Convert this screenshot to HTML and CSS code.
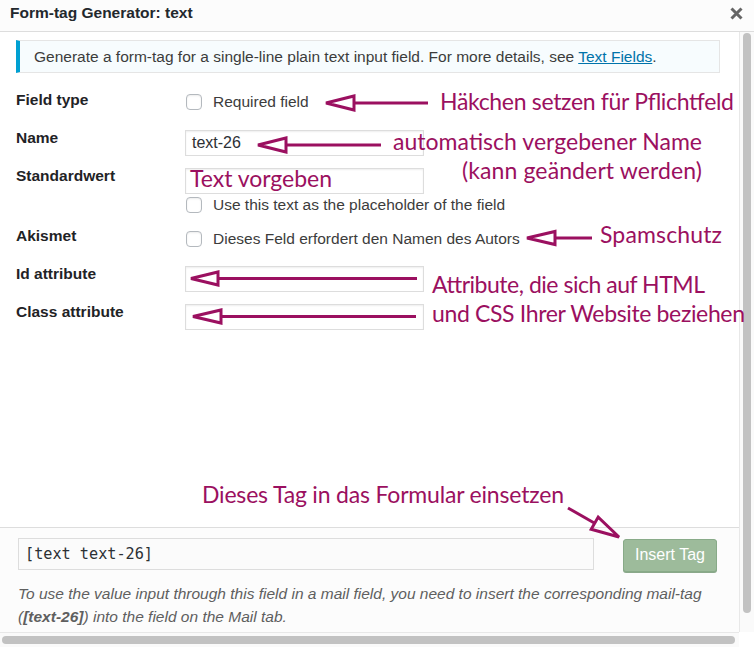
FILE: index.html
```html
<!DOCTYPE html>
<html lang="de">
<head>
<meta charset="utf-8">
<title>Form-tag Generator: text</title>
<link rel="stylesheet" href="styles.css">
</head>
<body>
<div class="window">
  <header class="titlebar">
    <h1 class="title">Form-tag Generator: text</h1>
    <span class="close" aria-label="Close">
      <svg width="13" height="13" viewBox="0 0 13 13"><path d="M1.5 1.5L11.5 11.5M11.5 1.5L1.5 11.5" stroke="#666" stroke-width="3" fill="none"/></svg>
    </span>
  </header>

  <div class="viewport">
    <main class="pane">
      <div class="content">
        <div class="notice">
          <p>Generate a form-tag for a single-line plain text input field. For more details, see <a href="#">Text Fields</a>.</p>
        </div>

        <div class="form">
          <div class="row">
            <div class="label">Field type</div>
            <div class="ctrl">
              <label class="check"><span class="box"></span>Required field</label>
            </div>
          </div>
          <div class="row">
            <div class="label">Name</div>
            <div class="ctrl"><div class="input">text-26</div></div>
          </div>
          <div class="row row-tall">
            <div class="label">Standardwert</div>
            <div class="ctrl">
              <div class="input"></div>
              <label class="check check-sub"><span class="box"></span>Use this text as the placeholder of the field</label>
            </div>
          </div>
          <div class="row">
            <div class="label">Akismet</div>
            <div class="ctrl">
              <label class="check check-low"><span class="box"></span>Dieses Feld erfordert den Namen des Autors</label>
            </div>
          </div>
          <div class="row">
            <div class="label">Id attribute</div>
            <div class="ctrl"><div class="input"></div></div>
          </div>
          <div class="row">
            <div class="label">Class attribute</div>
            <div class="ctrl"><div class="input"></div></div>
          </div>
        </div>
      </div>

      <footer class="insert-box">
        <div class="insert-row">
          <div class="tag-field">[text text-26]</div>
          <span class="button">Insert Tag</span>
        </div>
        <p class="description">To use the value input through this field in a mail field, you need to insert the corresponding mail-tag<br>(<strong>[text-26]</strong>) into the field on the Mail tab.</p>
      </footer>
    </main>
    <div class="vscroll"><div class="vthumb"></div></div>
  </div>

  <div class="hbar">
    <div class="htrack"><div class="hthumb"></div></div>
    <div class="corner"></div>
  </div>

  <svg class="annotations" width="754" height="647" viewBox="0 0 754 647">
    <g class="arrows">
      <path d="M354 103H428"/><path d="M326 103L354 96V110Z"/>
      <path d="M286 145H381"/><path d="M258 145L286 138V152Z"/>
      <path d="M555 238H592"/><path d="M527 238L555 231.5V244.5Z"/>
      <path d="M218 278.5H417"/><path d="M191 278.5L218 272V285Z"/>
      <path d="M221 316.5H416"/><path d="M193 316.5L221 310V323Z"/>
      <path d="M568 508L594.7 523.2"/><path d="M619 537L591.2 529.3L598.2 517.1Z"/>
    </g>
    <g class="notes">
      <text x="440" y="110" textLength="294" lengthAdjust="spacing">Häkchen setzen für Pflichtfeld</text>
      <text x="393" y="150" textLength="309" lengthAdjust="spacing">automatisch vergebener Name</text>
      <text x="462" y="179" textLength="240" lengthAdjust="spacing">(kann geändert werden)</text>
      <text x="190" y="187" textLength="142" lengthAdjust="spacing">Text vorgeben</text>
      <text x="600" y="243" textLength="122" lengthAdjust="spacing">Spamschutz</text>
      <text x="432" y="293" textLength="273" lengthAdjust="spacing">Attribute, die sich auf HTML</text>
      <text x="432" y="322" textLength="313" lengthAdjust="spacing">und CSS Ihrer Website beziehen</text>
      <text x="202" y="503" textLength="362" lengthAdjust="spacing">Dieses Tag in das Formular einsetzen</text>
    </g>
  </svg>
</div>
</body>
</html>
```

FILE: styles.css
```css
* { box-sizing: border-box; }

html, body {
  margin: 0;
  padding: 0;
  background: #fff;
}

body {
  font-family: "Liberation Sans", Arial, Helvetica, sans-serif;
  font-size: 15.5px;
  color: #3c3c3c;
}

.window {
  position: relative;
  width: 754px;
  height: 647px;
  overflow: hidden;
  background: #fff;
}

/* Title bar */
.titlebar {
  height: 32px;
  display: flex;
  align-items: center;
  justify-content: space-between;
  padding: 0 11px 6px 10px;
  background: #fcfcfc;
  border-bottom: 1px solid #ddd;
}

.title {
  margin: 0;
  font-size: 15.5px;
  line-height: 18px;
  font-weight: bold;
  color: #23282d;
}

.close {
  display: flex;
  width: 13px;
  height: 13px;
  margin-top: 1px;
}

/* Main viewport */
.viewport {
  display: flex;
  height: 600px;
}

.pane {
  width: 739px;
  display: flex;
  flex-direction: column;
}

.content {
  flex: 1;
  padding: 8px 19px 0 16px;
}

.notice {
  height: 33px;
  border: 1px solid #e5e5e5;
  border-left: 4px solid #00a0d2;
  background: #f7fcfe;
  padding: 0 14px;
  display: flex;
  align-items: center;
}

.notice p {
  margin: 0;
  line-height: 20px;
  color: #3c3c3c;
}

.notice a {
  color: #0073aa;
  text-decoration: underline;
}

/* Form rows */
.form {
  margin-top: 18px;
}

.row {
  display: flex;
  min-height: 38px;
}

.row-tall {
  min-height: 60px;
}

.label {
  width: 169px;
  flex: none;
  font-weight: bold;
  line-height: 18px;
  color: #1f2326;
}

.ctrl {
  display: flex;
  flex-direction: column;
  align-items: flex-start;
}

.input {
  width: 239px;
  height: 26px;
  margin-top: 1px;
  border: 1px solid #ddd;
  box-shadow: inset 0 1px 2px rgba(0, 0, 0, 0.07);
  background: #fff;
  padding: 0 6px;
  line-height: 24px;
  color: #2c3034;
  font-size: 16px;
}

.check {
  display: flex;
  align-items: center;
  height: 16px;
  margin-top: 3px;
  color: #3c3c3c;
  line-height: 18px;
}

.check-sub {
  margin-top: 3px;
}

.check-low {
  margin-top: 4px;
}

.box {
  width: 16px;
  height: 16px;
  margin: 0 11px 0 1px;
  border: 1px solid #b4b9be;
  border-radius: 4px;
  background: #fff;
  box-shadow: inset 0 1px 2px rgba(0, 0, 0, 0.08);
}

/* Footer */
.insert-box {
  height: 105px;
  background: #fcfcfc;
  border-top: 1px solid #ddd;
  padding: 10px 22px 0 18px;
}

.insert-row {
  display: flex;
  justify-content: space-between;
  align-items: flex-start;
}

.tag-field {
  width: 576px;
  height: 32px;
  border: 1px solid #ddd;
  background: #fbfbfb;
  padding: 0 6px;
  font-family: "DejaVu Sans Mono", "Liberation Mono", monospace;
  font-size: 15.2px;
  line-height: 30px;
  color: #2c3034;
}

.button {
  width: 94px;
  height: 33px;
  margin-top: 1px;
  border: 1px solid #88aa88;
  border-radius: 3px;
  background: #9dbb9b;
  box-shadow: 0 1px 0 #8aa88a;
  color: #fff;
  text-align: center;
  line-height: 30px;
  font-size: 16px;
}

.description {
  margin: 10px 0 0;
  font-style: italic;
  line-height: 23px;
  color: #5f5f5f;
  white-space: nowrap;
}

.description strong {
  font-weight: bold;
}

/* Scrollbars */
.vscroll {
  width: 15px;
  border-left: 1px solid #e8e8e8;
  background: #fafafa;
  padding: 1px 3px 0 3px;
}

.vthumb {
  width: 8px;
  height: 580px;
  border-radius: 4px;
  background: #c2c2c2;
}

.hbar {
  display: flex;
  height: 15px;
}

.htrack {
  width: 739px;
  border-top: 1px solid #e8e8e8;
  background: #fafafa;
  padding: 3px 0 0 2px;
}

.hthumb {
  width: 733px;
  height: 8px;
  border-radius: 4px;
  background: #c2c2c2;
}

.corner {
  width: 15px;
  background: #fff;
}

/* Annotation overlay */
.annotations {
  position: absolute;
  top: 0;
  left: 0;
  pointer-events: none;
}

.arrows path {
  fill: none;
  stroke: #9b1060;
  stroke-width: 3;
  stroke-linejoin: miter;
}

.notes text {
  font-family: Lato, "Open Sans", sans-serif;
  font-size: 23px;
  fill: #9b1060;
}
```
